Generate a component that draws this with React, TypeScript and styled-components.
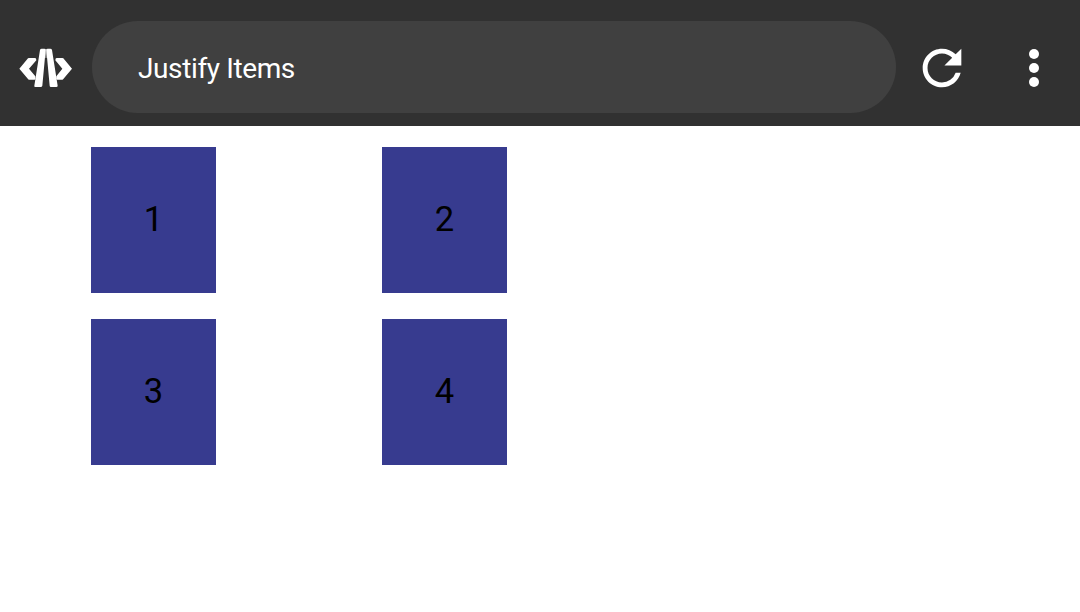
import React from "react";
import styled, { createGlobalStyle } from "styled-components";

const GlobalStyle = createGlobalStyle`
  * { box-sizing: border-box; }
  body {
    margin: 0;
    background: #fff;
    font-family: Roboto, sans-serif;
  }
`;

const Screen = styled.div`
  height: 612px;
  overflow: hidden;
`;

const Toolbar = styled.header`
  display: flex;
  align-items: center;
  height: 126px;
  padding: 8px 10px 0;
  background: #313131;
`;

const AddressBar = styled.div`
  display: flex;
  align-items: center;
  width: 804px;
  height: 92px;
  margin: 0 17px 0 10px;
  padding: 3px 46px 0;
  border-radius: 46px;
  background: #404040;
  color: #fff;
  font-size: 28px;
  line-height: 34px;
  letter-spacing: -0.38px;
`;

const IconButton = styled.button<{ $width: number; $gap?: number }>`
  display: flex;
  flex: none;
  width: ${(p) => p.$width}px;
  margin: 2px 0 0 ${(p) => p.$gap ?? 0}px;
  padding: 0;
  border: 0;
  background: none;
  color: #fff;
`;

const Grid = styled.main`
  display: grid;
  grid-template-columns: 265px 265px;
  gap: 26px;
  justify-items: center;
  padding: 21px;
`;

const Cell = styled.div`
  display: flex;
  align-items: center;
  justify-content: center;
  width: 125px;
  height: 146px;
  padding-bottom: 2px;
  background: #373b8f;
  color: #000;
  font-size: 34.6px;
  line-height: 41px;
`;

const LogoIcon = () => (
  <svg width="72" height="64" viewBox="0 0 216 192" fill="currentColor">
    <path d="M28 98 54 67Q55 66 57 66H75Q79 66 79 73L57 98 76 121Q78 130 74 131H57Q55 131 54 129Z" />
    <path d="M186 98 160 67Q159 66 157 66H140Q136 66 136 73L157 98 139 121Q137 130 141 131H157Q159 131 160 129Z" />
    <path d="M90 42Q91 38 95 38H103Q107 38 107 42L97 149Q96 153 92 153H76Q72 153 73 149Z" />
    <path d="M109 42Q109 38 113 38H121Q125 38 126 42L143 149Q143 153 139 153H123Q119 153 119 149Z" />
    <path d="M104 39H112L110 66H106Z" opacity="0.5" />
  </svg>
);

const RefreshIcon = () => (
  <svg width="58" height="58" viewBox="0 0 24 24" fill="currentColor">
    <path d="M17.65 6.35A7.958 7.958 0 0 0 12 4c-4.42 0-7.99 3.58-7.99 8s3.57 8 7.99 8c3.73 0 6.84-2.55 7.73-6h-2.08A5.99 5.99 0 0 1 12 18c-3.31 0-6-2.69-6-6s2.69-6 6-6c1.66 0 3.14.69 4.22 1.78L13 11h7V4l-2.35 2.35z" />
  </svg>
);

const MoreIcon = () => (
  <svg width="40" height="58" viewBox="0 0 40 58" fill="currentColor">
    <circle cx="20" cy="15" r="5" />
    <circle cx="20" cy="29" r="5" />
    <circle cx="20" cy="43" r="5" />
  </svg>
);

export default function App() {
  return (
    <Screen>
      <GlobalStyle />
      <Toolbar>
        <IconButton $width={72} aria-label="Home">
          <LogoIcon />
        </IconButton>
        <AddressBar>Justify Items</AddressBar>
        <IconButton $width={58} aria-label="Reload">
          <RefreshIcon />
        </IconButton>
        <IconButton $width={40} $gap={43} aria-label="More options">
          <MoreIcon />
        </IconButton>
      </Toolbar>
      <Grid>
        {[1, 2, 3, 4].map((n) => (
          <Cell key={n}>{n}</Cell>
        ))}
      </Grid>
    </Screen>
  );
}
